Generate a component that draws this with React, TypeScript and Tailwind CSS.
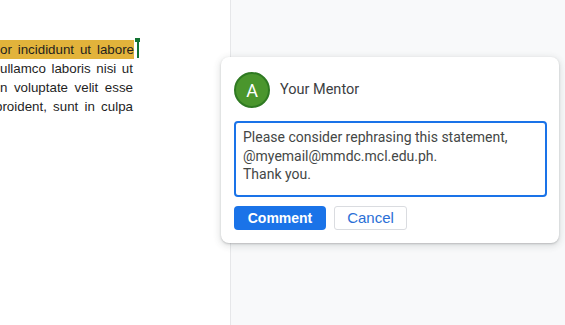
import React from "react";

const docFont = { fontFamily: '"Liberation Sans", Arial, sans-serif' };

export default function App() {
  return (
    <div className="w-[565px] h-[325px] flex overflow-hidden bg-white" style={docFont}>
      {/* Document page */}
      <div className="relative w-[230px] shrink-0 bg-white pt-[40px] overflow-hidden text-[13.33px] text-[#1f1f1f]">
        <div className="flex justify-between w-[134px] h-[19px] leading-[19px] whitespace-nowrap bg-[#e2b33b]">
          <span>or</span>
          <span>incididunt</span>
          <span>ut</span>
          <span>labore</span>
        </div>
        <div className="flex justify-between w-[133px] h-[19px] leading-[19px] whitespace-nowrap">
          <span>ullamco</span>
          <span>laboris</span>
          <span>nisi</span>
          <span>ut</span>
        </div>
        <div className="flex justify-between w-[133px] h-[19px] leading-[19px] whitespace-nowrap">
          <span className="-ml-[3px]">in</span>
          <span>voluptate</span>
          <span>velit</span>
          <span>esse</span>
        </div>
        <div className="flex justify-between w-[133px] h-[19px] leading-[19px] whitespace-nowrap">
          <span className="-ml-[5px]">proident,</span>
          <span>sunt</span>
          <span>in</span>
          <span>culpa</span>
        </div>
        {/* cursor */}
        <div className="absolute left-[135px] top-[38px] flex flex-col items-center">
          <div className="w-[5px] h-[4px] bg-[#137333]" />
          <div className="w-[2px] h-[16px] bg-[#137333]" />
        </div>
      </div>

      {/* Comments side panel */}
      <div className="flex-1 bg-[#f8f9fa] border-l border-[#e6e7e9] pt-[57px]">
        <div className="-ml-[10px] w-[338px] bg-white rounded-[8px] shadow-[0_1px_2px_rgba(60,64,67,0.25),0_2px_6px_2px_rgba(60,64,67,0.12)] pt-[15px] pb-[13px] pl-[13px] pr-[12px] relative">
          <div className="flex items-center h-[36px]" style={{ fontFamily: 'Roboto, "Liberation Sans", sans-serif' }}>
            <div className="w-[36px] h-[36px] rounded-full bg-[#4a962d] border-2 border-[#2f7a22] flex items-center justify-center text-white text-[18px]">
              A
            </div>
            <span className="ml-[10px] text-[14.5px] text-[#3c4043]">Your Mentor</span>
          </div>
          <div
            className="mt-[13px] h-[76px] border-2 border-[#1a73e8] rounded-[4px] pl-[7px] pt-[5px] text-[14px] leading-[18.5px] text-[#444746]"
            style={{ fontFamily: 'Roboto, "Liberation Sans", sans-serif' }}
          >
            <div>Please consider rephrasing this statement,</div>
            <div>@myemail@mmdc.mcl.edu.ph.</div>
            <div>Thank you.</div>
          </div>
          <div className="mt-[9px] flex items-center gap-[8px]">
            <button className="w-[92px] h-[24px] rounded-[4px] bg-[#1a73e8] text-white text-[14px] font-bold flex items-center justify-center">
              Comment
            </button>
            <button className="w-[73px] h-[24px] rounded-[3px] bg-white border border-[#dadce0] text-[#2a6fd6] text-[15px] flex items-center justify-center">
              Cancel
            </button>
          </div>
        </div>
      </div>
    </div>
  );
}
